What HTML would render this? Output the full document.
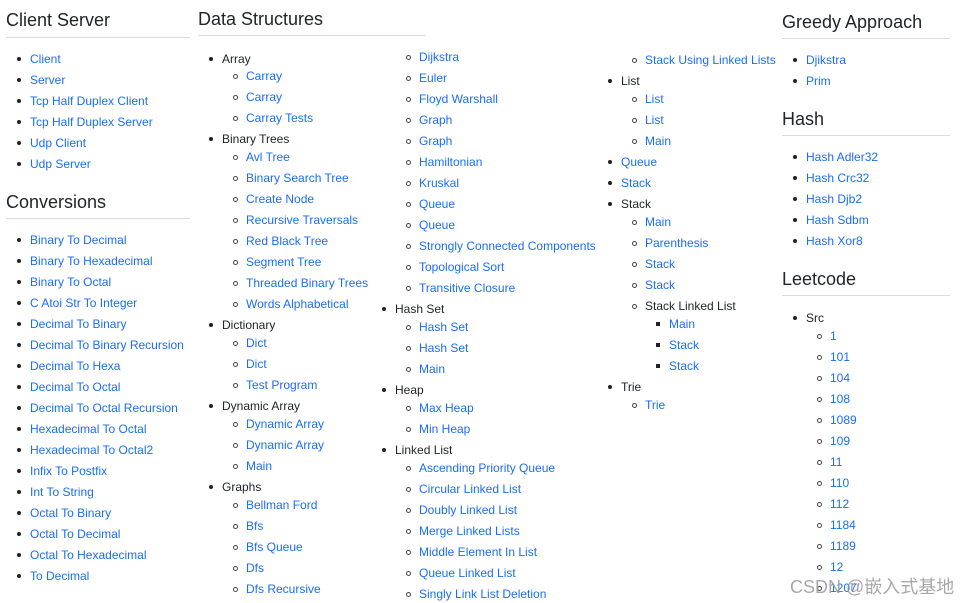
<!DOCTYPE html>
<html><head><meta charset="utf-8"><style>
body{margin:0;width:979px;height:603px;background:#fff;position:relative;overflow:hidden;font-family:"Liberation Sans",Arial,sans-serif;font-size:12px;color:#212529}
p{position:absolute;margin:0;line-height:16px;white-space:nowrap}
.l{color:#1a6ef5}
p::before{content:"";position:absolute;top:6px;left:-13px;width:4px;height:4px;border-radius:50%;background:#222}
p.c::before{background:none;border:1px solid #444;width:3px;height:3px}
p.s::before{border-radius:0;width:4px;height:4px}
h2{position:absolute;margin:0;font-size:18px;font-weight:normal;line-height:22px;color:#212529;white-space:nowrap}
hr{position:absolute;margin:0;border:0;border-top:1px solid #d9dde2;height:0}
.w{position:absolute;left:790px;top:573px;font-size:18px;color:#9a9a9a;font-family:"Liberation Sans","Noto Sans CJK SC",sans-serif;opacity:.85}
</style></head><body>
<h2 style="left:6px;top:9px">Client Server</h2><hr style="left:6px;top:37px;width:184px">
<p class="l" style="left:30px;top:51px">Client</p>
<p class="l" style="left:30px;top:72px">Server</p>
<p class="l" style="left:30px;top:93px">Tcp Half Duplex Client</p>
<p class="l" style="left:30px;top:114px">Tcp Half Duplex Server</p>
<p class="l" style="left:30px;top:135px">Udp Client</p>
<p class="l" style="left:30px;top:156px">Udp Server</p>
<h2 style="left:6px;top:191px">Conversions</h2><hr style="left:6px;top:218px;width:184px">
<p class="l" style="left:30px;top:232px">Binary To Decimal</p>
<p class="l" style="left:30px;top:253px">Binary To Hexadecimal</p>
<p class="l" style="left:30px;top:274px">Binary To Octal</p>
<p class="l" style="left:30px;top:295px">C Atoi Str To Integer</p>
<p class="l" style="left:30px;top:316px">Decimal To Binary</p>
<p class="l" style="left:30px;top:337px">Decimal To Binary Recursion</p>
<p class="l" style="left:30px;top:358px">Decimal To Hexa</p>
<p class="l" style="left:30px;top:379px">Decimal To Octal</p>
<p class="l" style="left:30px;top:400px">Decimal To Octal Recursion</p>
<p class="l" style="left:30px;top:421px">Hexadecimal To Octal</p>
<p class="l" style="left:30px;top:442px">Hexadecimal To Octal2</p>
<p class="l" style="left:30px;top:463px">Infix To Postfix</p>
<p class="l" style="left:30px;top:484px">Int To String</p>
<p class="l" style="left:30px;top:505px">Octal To Binary</p>
<p class="l" style="left:30px;top:526px">Octal To Decimal</p>
<p class="l" style="left:30px;top:547px">Octal To Hexadecimal</p>
<p class="l" style="left:30px;top:568px">To Decimal</p>

<h2 style="left:198px;top:8px">Data Structures</h2><hr style="left:198px;top:35px;width:228px">
<p style="left:222px;top:51px">Array</p>
<p class="c l" style="left:246px;top:68px">Carray</p>
<p class="c l" style="left:246px;top:89px">Carray</p>
<p class="c l" style="left:246px;top:110px">Carray Tests</p>
<p style="left:222px;top:131px">Binary Trees</p>
<p class="c l" style="left:246px;top:149px">Avl Tree</p>
<p class="c l" style="left:246px;top:170px">Binary Search Tree</p>
<p class="c l" style="left:246px;top:191px">Create Node</p>
<p class="c l" style="left:246px;top:212px">Recursive Traversals</p>
<p class="c l" style="left:246px;top:233px">Red Black Tree</p>
<p class="c l" style="left:246px;top:254px">Segment Tree</p>
<p class="c l" style="left:246px;top:275px">Threaded Binary Trees</p>
<p class="c l" style="left:246px;top:296px">Words Alphabetical</p>
<p style="left:222px;top:317px">Dictionary</p>
<p class="c l" style="left:246px;top:335px">Dict</p>
<p class="c l" style="left:246px;top:356px">Dict</p>
<p class="c l" style="left:246px;top:377px">Test Program</p>
<p style="left:222px;top:398px">Dynamic Array</p>
<p class="c l" style="left:246px;top:416px">Dynamic Array</p>
<p class="c l" style="left:246px;top:437px">Dynamic Array</p>
<p class="c l" style="left:246px;top:458px">Main</p>
<p style="left:222px;top:479px">Graphs</p>
<p class="c l" style="left:246px;top:497px">Bellman Ford</p>
<p class="c l" style="left:246px;top:518px">Bfs</p>
<p class="c l" style="left:246px;top:539px">Bfs Queue</p>
<p class="c l" style="left:246px;top:560px">Dfs</p>
<p class="c l" style="left:246px;top:581px">Dfs Recursive</p>

<p class="c l" style="left:419px;top:49px">Dijkstra</p>
<p class="c l" style="left:419px;top:70px">Euler</p>
<p class="c l" style="left:419px;top:91px">Floyd Warshall</p>
<p class="c l" style="left:419px;top:112px">Graph</p>
<p class="c l" style="left:419px;top:133px">Graph</p>
<p class="c l" style="left:419px;top:154px">Hamiltonian</p>
<p class="c l" style="left:419px;top:175px">Kruskal</p>
<p class="c l" style="left:419px;top:196px">Queue</p>
<p class="c l" style="left:419px;top:217px">Queue</p>
<p class="c l" style="left:419px;top:238px">Strongly Connected Components</p>
<p class="c l" style="left:419px;top:259px">Topological Sort</p>
<p class="c l" style="left:419px;top:280px">Transitive Closure</p>
<p style="left:395px;top:301px">Hash Set</p>
<p class="c l" style="left:419px;top:319px">Hash Set</p>
<p class="c l" style="left:419px;top:340px">Hash Set</p>
<p class="c l" style="left:419px;top:361px">Main</p>
<p style="left:395px;top:382px">Heap</p>
<p class="c l" style="left:419px;top:400px">Max Heap</p>
<p class="c l" style="left:419px;top:421px">Min Heap</p>
<p style="left:395px;top:442px">Linked List</p>
<p class="c l" style="left:419px;top:460px">Ascending Priority Queue</p>
<p class="c l" style="left:419px;top:481px">Circular Linked List</p>
<p class="c l" style="left:419px;top:502px">Doubly Linked List</p>
<p class="c l" style="left:419px;top:523px">Merge Linked Lists</p>
<p class="c l" style="left:419px;top:544px">Middle Element In List</p>
<p class="c l" style="left:419px;top:565px">Queue Linked List</p>
<p class="c l" style="left:419px;top:586px">Singly Link List Deletion</p>

<p class="c l" style="left:645px;top:52px">Stack Using Linked Lists</p>
<p style="left:621px;top:73px">List</p>
<p class="c l" style="left:645px;top:91px">List</p>
<p class="c l" style="left:645px;top:112px">List</p>
<p class="c l" style="left:645px;top:133px">Main</p>
<p class="l" style="left:621px;top:154px">Queue</p>
<p class="l" style="left:621px;top:175px">Stack</p>
<p style="left:621px;top:196px">Stack</p>
<p class="c l" style="left:645px;top:214px">Main</p>
<p class="c l" style="left:645px;top:235px">Parenthesis</p>
<p class="c l" style="left:645px;top:256px">Stack</p>
<p class="c l" style="left:645px;top:277px">Stack</p>
<p class="c" style="left:645px;top:298px">Stack Linked List</p>
<p class="s l" style="left:669px;top:316px">Main</p>
<p class="s l" style="left:669px;top:337px">Stack</p>
<p class="s l" style="left:669px;top:358px">Stack</p>
<p style="left:621px;top:379px">Trie</p>
<p class="c l" style="left:645px;top:397px">Trie</p>

<h2 style="left:782px;top:11px">Greedy Approach</h2><hr style="left:782px;top:38px;width:168px">
<p class="l" style="left:806px;top:52px">Djikstra</p>
<p class="l" style="left:806px;top:73px">Prim</p>
<h2 style="left:782px;top:108px">Hash</h2><hr style="left:782px;top:135px;width:168px">
<p class="l" style="left:806px;top:149px">Hash Adler32</p>
<p class="l" style="left:806px;top:170px">Hash Crc32</p>
<p class="l" style="left:806px;top:191px">Hash Djb2</p>
<p class="l" style="left:806px;top:212px">Hash Sdbm</p>
<p class="l" style="left:806px;top:233px">Hash Xor8</p>
<h2 style="left:782px;top:268px">Leetcode</h2><hr style="left:782px;top:295px;width:168px">
<p style="left:806px;top:310px">Src</p>
<p class="c l" style="left:830px;top:328px">1</p>
<p class="c l" style="left:830px;top:349px">101</p>
<p class="c l" style="left:830px;top:370px">104</p>
<p class="c l" style="left:830px;top:391px">108</p>
<p class="c l" style="left:830px;top:412px">1089</p>
<p class="c l" style="left:830px;top:433px">109</p>
<p class="c l" style="left:830px;top:454px">11</p>
<p class="c l" style="left:830px;top:475px">110</p>
<p class="c l" style="left:830px;top:496px">112</p>
<p class="c l" style="left:830px;top:517px">1184</p>
<p class="c l" style="left:830px;top:538px">1189</p>
<p class="c l" style="left:830px;top:559px">12</p>
<p class="c l" style="left:830px;top:580px">1207</p>
<div class="w">CSDN @嵌入式基地</div>
</body></html>
